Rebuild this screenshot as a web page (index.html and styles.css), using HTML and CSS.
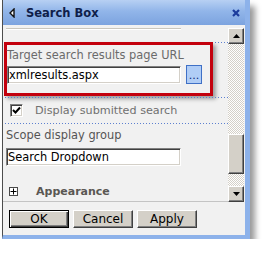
FILE: index.html
```html
<!DOCTYPE html>
<html lang="en">
<head>
    <meta charset="UTF-8">
    <title>Search Box</title>
    <link rel="stylesheet" href="styles.css">
</head>
<body>
    <div class="window">
        <div class="titlebar">
            <svg class="back" width="6" height="10" viewBox="0 0 6 10">
                <polygon points="5,1 1,5 5,9" fill="#fff" stroke="#111" stroke-width="1.4"/>
            </svg>
            <span class="title">Search Box</span>
            <svg class="close" width="8" height="8" viewBox="0 0 8 8">
                <path d="M1 1 L7 7 M7 1 L1 7" stroke="#1c3c9c" stroke-width="2.2"/>
            </svg>
        </div>

        <div class="main">
            <div class="pane">
                <!-- bottom edge of the field scrolled out of view -->
                <div class="cut-field"></div>
                <div class="dots dots-top"></div>

                <div class="highlight">
                    <div class="label">Target search results page URL</div>
                    <div class="url-row">
                        <input class="field" type="text" value="xmlresults.aspx">
                        <span class="browse">...</span>
                    </div>
                </div>
                <div class="dots dots-after"></div>

                <div class="check-row">
                    <span class="checkbox">
                        <svg width="9" height="9" viewBox="0 0 9 9">
                            <polyline points="1,4 3.5,6.5 8,1.5" fill="none" stroke="#000" stroke-width="2"/>
                        </svg>
                    </span>
                    <span class="check-label">Display submitted search</span>
                </div>
                <div class="dots"></div>

                <div class="label scope-label">Scope display group</div>
                <input class="field scope-field" type="text" value="Search Dropdown">

                <div class="section">
                    <span class="plus">
                        <svg width="7" height="7" viewBox="0 0 7 7">
                            <path d="M0.5 3.5 H6.5 M3.5 0.5 V6.5" stroke="#000" stroke-width="1"/>
                        </svg>
                    </span>
                    <span class="section-name">Appearance</span>
                </div>
            </div>

            <div class="scrollbar">
                <div class="sb-btn">
                    <svg width="7" height="4" viewBox="0 0 7 4"><polygon points="3.5,0 7,4 0,4" fill="#000"/></svg>
                </div>
                <div class="sb-track">
                    <div class="sb-thumb"></div>
                </div>
                <div class="sb-btn">
                    <svg width="7" height="4" viewBox="0 0 7 4"><polygon points="0,0 7,0 3.5,4" fill="#000"/></svg>
                </div>
            </div>
        </div>

        <div class="buttons">
            <button class="btn btn-default">OK</button>
            <button class="btn">Cancel</button>
            <button class="btn">Apply</button>
        </div>
    </div>
</body>
</html>
```

FILE: styles.css
```css
body {
    margin: 0;
    background: #fff;
    font-family: "DejaVu Sans", Verdana, sans-serif;
    font-size: 11px;
}
.window {
    margin-left: 2px;
    width: 242px;
    background: #f1f1f1;
    border-left: 1px solid #4d4d4d;
    border-right: 5px solid #8db2ea;
    border-bottom: 4px solid #8db2ea;
    box-shadow: 5px 6px 6px rgba(0, 0, 0, 0.4);
}
.titlebar {
    height: 25px;
    display: flex;
    align-items: center;
    background: linear-gradient(#b7d0f3, #91b5e9 45%, #7ca3df);
}
.back {
    margin-left: 6px;
}
.title {
    margin-left: 11px;
    font-weight: bold;
    font-size: 11.5px;
    color: #0f1e4a;
}
.close {
    margin-left: auto;
    margin-right: 5px;
}
.main {
    display: flex;
    height: 177px;
}
.pane {
    width: 225px;
    box-sizing: border-box;
    border-bottom: 1px solid #c4c4c4;
    overflow: hidden;
}
.cut-field {
    margin: 3px 0 0 3px;
    width: 175px;
    height: 1px;
    background: #c9c6be;
    border-bottom: 1px solid #fff;
}
.dots {
    height: 1px;
    margin-left: 2px;
    background-image: linear-gradient(to right, #5d80cf 1px, transparent 1px);
    background-size: 3px 1px;
}
.dots-top {
    margin-top: 12px;
}
.dots-after {
    margin-top: 1px;
}
.highlight {
    margin: -1px 0 0 1px;
    width: 203px;
    border: 3px solid #c3000d;
    padding: 3px 0 9px;
    box-shadow: 3px 3px 4px rgba(0, 0, 0, 0.35);
}
.label {
    line-height: 14px;
    font-size: 11.4px;
    color: #6b6b6b;
    white-space: nowrap;
}
.url-row {
    display: flex;
    align-items: center;
    gap: 5px;
    margin-top: 3px;
}
.field {
    width: 174px;
    height: 18px;
    box-sizing: border-box;
    margin: 0;
    padding: 0 1px;
    font-family: "DejaVu Sans", Verdana, sans-serif;
    font-size: 11.4px;
    color: #000;
    background: #fff;
    border: 1px solid;
    border-color: #808080 #fff #fff #808080;
    box-shadow: inset 1px 1px #404040, inset -1px -1px #d4d0c8;
    outline: none;
}
.browse {
    width: 16px;
    height: 19px;
    box-sizing: border-box;
    border: 1px solid #3f70c6;
    background: #b0cdf6;
    color: #0a2a78;
    display: flex;
    justify-content: center;
    align-items: flex-end;
    line-height: 14px;
}
.check-row {
    height: 25px;
    display: flex;
    align-items: center;
}
.checkbox {
    margin-left: 7px;
    width: 13px;
    height: 13px;
    box-sizing: border-box;
    background: #fff;
    border: 1px solid;
    border-color: #808080 #fff #fff #808080;
    box-shadow: inset 1px 1px #404040, inset -1px -1px #d4d0c8;
    display: flex;
    align-items: center;
    justify-content: center;
}
.check-label {
    margin-left: 12px;
    color: #707070;
    font-size: 11.2px;
}
.scope-label {
    margin: 4px 0 0 3px;
    color: #555;
}
.scope-field {
    display: block;
    margin: 6px 0 0 3px;
    width: 175px;
}
.section {
    display: flex;
    align-items: center;
    height: 16px;
    margin-top: 17px;
}
.plus {
    margin-left: 6px;
    width: 9px;
    height: 9px;
    box-sizing: border-box;
    border: 1px solid #4a4a4a;
    background: #fff;
    display: flex;
    align-items: center;
    justify-content: center;
}
.section-name {
    margin-left: 18px;
    font-weight: bold;
    color: #5a5753;
}
.scrollbar {
    width: 17px;
    padding-top: 3px;
    box-sizing: border-box;
    display: flex;
    flex-direction: column;
}
.sb-btn,
.sb-thumb {
    width: 16px;
    height: 16px;
    box-sizing: border-box;
    background: #d4d0c8;
    border: 1px solid;
    border-color: #fff #404040 #404040 #fff;
    box-shadow: inset -1px -1px #808080;
    display: flex;
    align-items: center;
    justify-content: center;
}
.sb-track {
    flex: 1;
    width: 16px;
    padding-top: 90px;
    box-sizing: border-box;
    background: conic-gradient(#fff 25%, #d4d0c8 0 50%, #fff 0 75%, #d4d0c8 0);
    background-size: 2px 2px;
}
.sb-thumb {
    height: 40px;
}
.buttons {
    height: 33px;
    box-sizing: border-box;
    padding: 8px 0 0 6px;
    display: flex;
    gap: 4px;
    align-items: flex-start;
}
.btn {
    width: 60px;
    height: 18px;
    padding: 0;
    font-family: "DejaVu Sans", Verdana, sans-serif;
    font-size: 12px;
    color: #000;
    background: #d4d0c8;
    border: 1px solid;
    border-color: #fff #404040 #404040 #fff;
    box-shadow: inset -1px -1px #808080;
}
.btn-default {
    border-color: #000;
    box-shadow: inset 1px 1px #fff, inset -1px -1px #404040, inset -2px -2px #808080;
}
```
